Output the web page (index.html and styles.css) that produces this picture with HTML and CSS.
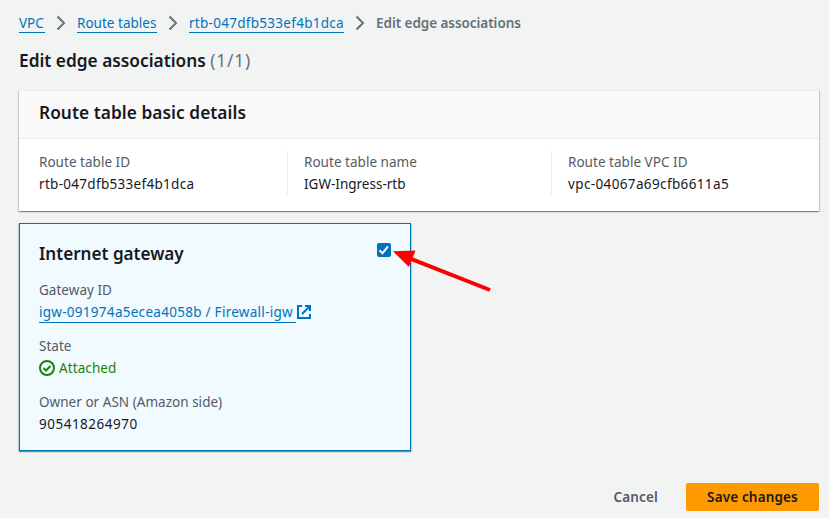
FILE: index.html
```html
<!DOCTYPE html>
<html lang="en">
<head>
<meta charset="utf-8">
<title>Edit edge associations</title>
<link rel="stylesheet" href="styles.css">
</head>
<body>
<nav class="crumbs">
  <a class="link c1">VPC</a>
  <svg class="chev" viewBox="0 0 10 16"><path d="M1.500 1.500 8 8l-6.500 6.500"/></svg>
  <a class="link c2">Route tables</a>
  <svg class="chev" viewBox="0 0 10 16"><path d="M1.500 1.500 8 8l-6.500 6.500"/></svg>
  <a class="link c3">rtb-047dfb533ef4b1dca</a>
  <svg class="chev" viewBox="0 0 10 16"><path d="M1.500 1.500 8 8l-6.500 6.500"/></svg>
  <span class="current">Edit edge associations</span>
</nav>
<h1 class="title">Edit edge associations <span class="count">(1/1)</span></h1>
<section class="panel">
  <header class="panel-head"><h2 class="heading h-details">Route table basic details</h2></header>
  <div class="columns">
    <div class="col"><div class="label">Route table ID</div><div class="value v-id">rtb-047dfb533ef4b1dca</div></div>
    <div class="col"><div class="label">Route table name</div><div class="value">IGW-Ingress-rtb</div></div>
    <div class="col"><div class="label">Route table VPC ID</div><div class="value v-vpc">vpc-04067a69cfb6611a5</div></div>
  </div>
</section>
<section class="card">
  <header class="card-head">
    <h2 class="heading h-igw">Internet gateway</h2>
    <span class="check" role="checkbox" aria-checked="true"><svg viewBox="0 0 14 14"><path d="m2.500 7.300 3 3 5.500-7"/></svg></span>
  </header>
  <div class="field">
    <div class="label">Gateway ID</div>
    <div class="value row"><a class="link igw">igw-091974a5ecea4058b / Firewall-igw</a><svg class="ext" viewBox="0 0 14 14"><path d="M5 1H1v12h12V9M8 1h5v5M12.500 1.500 5 9"/></svg></div>
  </div>
  <div class="field">
    <div class="label">State</div>
    <div class="value row state"><svg class="ok" viewBox="0 0 16 16"><circle cx="8" cy="8" r="7"/><path d="m4.500 8 2.500 2.500 4.500-4.500"/></svg><span class="attached">Attached</span></div>
  </div>
  <div class="field">
    <div class="label">Owner or ASN (Amazon side)</div>
    <div class="value v-owner">905418264970</div>
  </div>
</section>
<footer class="actions">
  <button class="btn cancel">Cancel</button>
  <button class="btn save">Save changes</button>
</footer>
<svg class="arrow" viewBox="0 0 100 45"><path class="shaft" d="M97 40 18 8.800"/><path class="head" d="m0 1.300 22.500-.8-6.500 16.500z"/></svg>
</body>
</html>
```
FILE: styles.css
```css
* { box-sizing: border-box; }
body {
  margin: 0;
  width: 829px;
  height: 518px;
  overflow: hidden;
  padding: 12px 10px 0 19px;
  background: #f2f3f3;
  color: #16191f;
  font: 13.5px/22px "Noto Sans", sans-serif;
}
h1, h2 { margin: 0; white-space: nowrap; }
.crumbs { display: flex; height: 22px; align-items: center; white-space: nowrap; }
.link { color: #0073bb; border-bottom: 1px solid #0073bb; line-height: 18px; height: 19px; }
.crumbs .link { margin-top: 1px; line-height: 18px; }
.c1 { width: 26px; }
.c2 { width: 80px; letter-spacing: .02px; }
.c3 { width: 155px; letter-spacing: .28px; }
.chev { width: 10px; height: 16px; margin: 0 11px; fill: none; stroke: #687078; stroke-width: 2; }
.current { color: #687078; font-weight: 600; letter-spacing: -.05px; }
.title { margin-top: 15px; font-size: 17.3px; line-height: 24px; font-weight: 600; }
.count { color: #687078; font-weight: 400; letter-spacing: .8px; }
.panel {
  margin-top: 17px;
  width: 800px;
  height: 121px;
  background: #fff;
  box-shadow: 0 1px 1px rgba(0, 28, 36, .3), 1px 1px 1px rgba(0, 28, 36, .15), -1px 1px 1px rgba(0, 28, 36, .15);
}
.panel-head { height: 49px; padding: 11px 20px 0; background: #fafafa; border-top: 1px solid #eaeded; border-bottom: 1px solid #eaeded; }
.heading { font-size: 17.3px; line-height: 22px; font-weight: 600; }
.h-details { letter-spacing: .05px; }
.h-igw { font-size: 17.1px; }
.columns { display: grid; grid-template-columns: 268px 264px 268px; padding-top: 12px; }
.col { height: 44px; padding-left: 16px; border-left: 1px solid #eaeded; white-space: nowrap; }
.col:first-child { padding-left: 20px; border: 0; }
.label { color: #545b64; letter-spacing: .03px; }
.v-id { letter-spacing: .3px; }
.v-vpc { letter-spacing: .37px; }
.v-owner { letter-spacing: .5px; }
.card {
  margin-top: 12px;
  width: 392px;
  height: 228px;
  padding: 19px 19px 0;
  background: #f1faff;
  border: 1px solid #0073bb;
  box-shadow: 0 1px 1px rgba(0, 28, 36, .3), 1px 1px 1px rgba(0, 28, 36, .15), -1px 1px 1px rgba(0, 28, 36, .15);
}
.card-head { display: flex; justify-content: space-between; height: 36px; }
.check { width: 14px; height: 14px; background: #0073bb; border-radius: 2px; }
.check svg { display: block; fill: none; stroke: #fff; stroke-width: 2; }
.field { height: 44px; margin-bottom: 12px; white-space: nowrap; }
.row { display: flex; align-items: center; height: 22px; }
.igw { width: 257px; height: 20px; margin-top: 2px; line-height: 18px; letter-spacing: .28px; }
.ext { width: 14px; height: 14px; margin-left: 1px; fill: none; stroke: #0073bb; stroke-width: 2; }
.ok { width: 16px; height: 16px; margin-right: 4px; fill: none; stroke: #1d8102; stroke-width: 2; }
.state { color: #1d8102; }
.attached { letter-spacing: .1px; }
.actions { display: flex; justify-content: flex-end; margin-top: 32px; height: 28px; }
.btn { border: 0; padding: 0; background: none; font: 600 13.5px/28px "Noto Sans", sans-serif; color: #545b64; letter-spacing: .15px; }
.cancel { margin-right: 28px; }
.save { width: 133px; background: #ff9900; color: #16191f; border-radius: 2px; }
.arrow { position: absolute; left: 393px; top: 250px; width: 100px; height: 45px; }
.shaft { fill: none; stroke: #f00; stroke-width: 4; }
.head { fill: #f00; }
```
